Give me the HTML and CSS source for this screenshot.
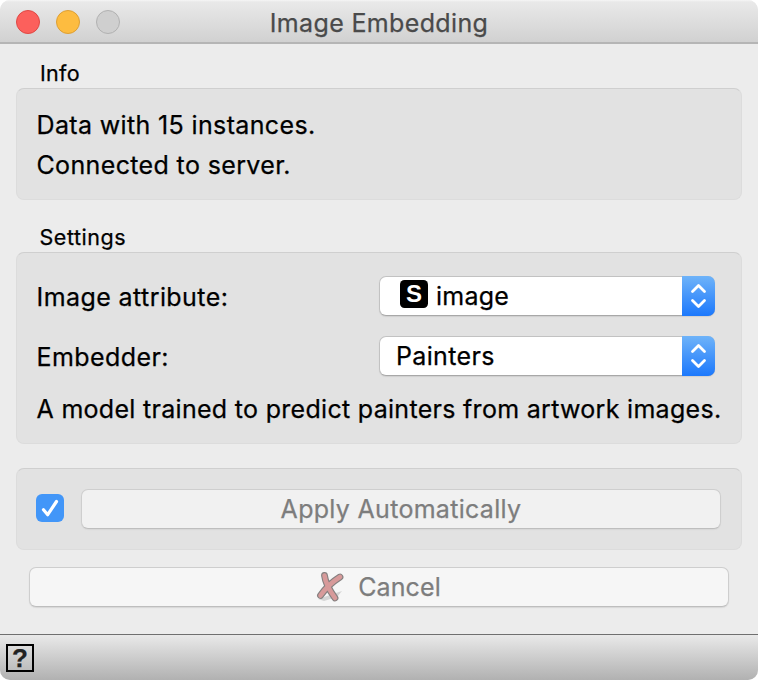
FILE: index.html
```
<!DOCTYPE html>
<html lang="en">
<head>
<meta charset="utf-8">
<title>Image Embedding</title>
<link rel="stylesheet" href="styles.css">
</head>
<body>
<div class="window">
  <header class="titlebar">
    <div class="lights"><span class="light close"></span><span class="light minimize"></span><span class="light disabled"></span></div>
    <h1 class="title">Image Embedding</h1>
  </header>
  <main class="content">
    <h2 class="group-title">Info</h2>
    <section class="group info">
      <p class="line">Data with 15 instances.</p>
      <p class="line">Connected to server.</p>
    </section>
    <h2 class="group-title settings-title">Settings</h2>
    <section class="group settings">
      <div class="row">
        <span class="label">Image attribute:</span>
        <div class="select">
          <span class="value with-icon"><svg class="string-icon" viewBox="0 0 28 28"><rect width="28" height="28" rx="4.5"/><text x="14" y="22" text-anchor="middle">S</text></svg><span>image</span></span>
          <span class="stepper"><svg viewBox="0 0 33 40"><path d="M10.500 15.500 16.500 9.500l6 6M10.500 24.500l6 6 6-6"/></svg></span>
        </div>
      </div>
      <div class="row">
        <span class="label">Embedder:</span>
        <div class="select">
          <span class="value painters">Painters</span>
          <span class="stepper"><svg viewBox="0 0 33 40"><path d="M10.500 15.500 16.500 9.500l6 6M10.500 24.500l6 6 6-6"/></svg></span>
        </div>
      </div>
      <p class="description">A model trained to predict painters from artwork images.</p>
    </section>
    <section class="group apply">
      <span class="checkbox"><svg viewBox="0 0 28 28"><path d="M7.500 15.800 11.700 20.700 20.500 7.500"/></svg></span>
      <button class="button">Apply Automatically</button>
    </section>
    <button class="button cancel">
      <svg class="cross" viewBox="0 0 28 32"><path class="shade" d="M2 28 26 20 21 26 8 30z"/><path class="edge" d="M8.500 4.500C9.500 13 14 20 19 27M24 6C16 11 9 18 4.500 24.500"/><path class="fill" d="M8.500 4.500C9.500 13 14 20 19 27M24 6C16 11 9 18 4.500 24.500"/></svg>
      <span>Cancel</span>
    </button>
  </main>
  <footer class="statusbar"><span class="help">?</span></footer>
</div>
</body>
</html>
```
FILE: styles.css
```
* { box-sizing: border-box; }
body { margin: 0; background: #fff; font-family: Inter, "Liberation Sans", sans-serif; font-size: 25px; letter-spacing: 0.36px; color: #000; -webkit-text-stroke: 0.25px; }
h1, h2, p { margin: 0; font-weight: 400; }
.window { width: 758px; height: 680px; display: flex; flex-direction: column; background: #ececec; border-radius: 10px; overflow: hidden; }
.titlebar { height: 44px; flex: none; display: grid; grid-template-columns: 1fr auto 1fr; align-items: center; padding-top: 2px; background: linear-gradient(#f6f6f6 0, #e9e9e9 2px, #d1d1d1 42px); border-bottom: 2px solid #b5b5b5; }
.lights { display: flex; gap: 16px; padding-left: 16px; }
.light { width: 24px; height: 24px; border-radius: 50%; border: 1px solid; }
.close { background: #fc605c; border-color: #df4844; }
.minimize { background: #fdbc40; border-color: #dd9f34; }
.disabled { background: #cfcfcf; border-color: #b1b1b1; }
.title { font-size: 25px; line-height: 30px; color: #4a4a4a; padding-top: 1px; }
.content { height: 590px; padding: 15px 16px 0; display: flex; flex-direction: column; }
.group-title { font-size: 21.5px; line-height: 29px; padding-left: 24px; letter-spacing: 0.3px; }
.group { background: #e2e2e2; border: 1px solid #dcdcdc; border-top-color: #cfcfcf; border-radius: 8px; padding: 0 19px; }
.info { height: 112px; padding-top: 16px; }
.line { line-height: 40px; padding-left: 0.5px; }
.settings-title { margin-top: 23px; padding-left: 23.5px; letter-spacing: 0.55px; }
.settings { height: 192px; padding-top: 13px; }
.row { display: flex; align-items: center; justify-content: space-between; height: 60px; padding-right: 7px; }
.label { padding: 1px 0 0 0.5px; letter-spacing: 0.42px; }
.select { width: 336px; height: 40px; display: flex; justify-content: space-between; background: #fff; border-radius: 7px; border: 1px solid #c2c2c2; border-bottom-color: #a8a8a8; box-shadow: 0 1px 1px #d0d0d0; }
.value { display: flex; align-items: center; padding-left: 16px; letter-spacing: 0.25px; }
.painters { letter-spacing: 0.35px; }
.stepper { width: 33px; height: 40px; margin: -1px -1px 0 0; background: linear-gradient(#6eb3f9, #1c78fc); border-radius: 0 7px 7px 0; }
.stepper svg { display: block; fill: none; stroke: #fff; stroke-width: 2.8; stroke-linecap: round; stroke-linejoin: round; }
.with-icon { padding-left: 20px; gap: 8px; }
.string-icon { width: 28px; height: 28px; margin-top: -4px; }
.string-icon text { font: bold 24px "Liberation Sans", sans-serif; letter-spacing: 0; fill: #fff; -webkit-text-stroke: 0; }
.description { line-height: 44px; padding: 1px 0 0 0.5px; white-space: nowrap; letter-spacing: 0.3px; }
.apply { height: 82px; margin-top: 24px; display: flex; align-items: center; gap: 17px; }
.checkbox { width: 28px; height: 28px; margin-top: -2px; border-radius: 6px; background: #4296f8; flex: none; }
.checkbox svg { display: block; fill: none; stroke: #fff; stroke-width: 3.2; stroke-linecap: round; stroke-linejoin: round; }
.button { flex: none; width: 640px; height: 40px; padding: 0; display: flex; align-items: center; justify-content: center; font: 25px/30px Inter, sans-serif; letter-spacing: 0.3px; color: #7d7d7d; background: #f1f1f1; border: 1px solid #cecece; border-bottom-color: #bebebe; border-radius: 7px; box-shadow: 0 1px 1px #d8d8d8; }
.cancel { width: 700px; margin: 17px 0 0 13px; background: #f6f6f6; gap: 14px; letter-spacing: 0.1px; padding-right: 1px; }
.cross { width: 28px; height: 32px; fill: none; stroke-linecap: round; }
.cross .shade { fill: #d4d4d4; }
.cross .edge { stroke: #858080; stroke-width: 6.8; }
.cross .fill { stroke: #d79a9a; stroke-width: 4.6; }
.statusbar { height: 46px; padding: 9px 6px; border-top: 1px solid #6f6f6f; background: linear-gradient(#e9e9e9, #b1b1b1); }
.help { display: flex; align-items: center; justify-content: center; width: 28px; height: 28px; border: 2px solid #000; font: bold 26px/24px "Liberation Sans", sans-serif; letter-spacing: 0; color: #222; }
```
